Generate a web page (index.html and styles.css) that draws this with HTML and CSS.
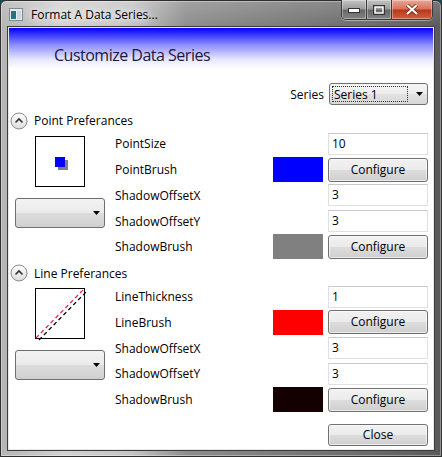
FILE: index.html
```html
<!DOCTYPE html>
<html lang="en">
<head>
    <meta charset="UTF-8">
    <title>Format A Data Series...</title>
    <link rel="stylesheet" href="styles.css">
</head>
<body>
    <div class="window">
        <div class="titlebar">
            <svg class="app-icon" width="14" height="13" viewBox="0 0 14 13">
                <rect x="0.5" y="0.5" width="13" height="12" fill="#e4ecee" stroke="#7a8a90"/>
                <rect x="2" y="3" width="5" height="8" fill="#2f7078"/>
                <rect x="8" y="3" width="4" height="8" fill="#c8d8dc"/>
            </svg>
            <span class="caption">Format A Data Series...</span>
            <div class="caption-buttons">
                <div class="cap-btn min">
                    <svg width="12" height="6" viewBox="0 0 12 6"><rect x="0.5" y="1.5" width="11" height="4" fill="#fff" stroke="#333"/></svg>
                </div>
                <div class="cap-btn max">
                    <svg width="12" height="10" viewBox="0 0 12 10"><rect x="1" y="1" width="10" height="8" fill="none" stroke="#333" stroke-width="2"/><rect x="2" y="2" width="8" height="6" fill="none" stroke="#fff" stroke-width="1.5"/></svg>
                </div>
                <div class="cap-btn close">
                    <svg width="14" height="11" viewBox="0 0 14 11"><path d="M2 1 L12 10 M12 1 L2 10" stroke="#6a2010" stroke-width="3.6"/><path d="M2 1 L12 10 M12 1 L2 10" stroke="#fff" stroke-width="2.2"/></svg>
                </div>
            </div>
        </div>

        <div class="client">
            <div class="banner">
                <h1>Customize Data Series</h1>
            </div>

            <div class="series-row">
                <span>Series</span>
                <div class="combo series-combo">
                    <span class="focus">Series 1</span>
                    <svg class="arrow" width="7" height="4" viewBox="0 0 7 4"><polygon points="0,0 7,0 3.5,4" fill="#000"/></svg>
                </div>
            </div>

            <section class="group">
                <div class="expander">
                    <svg class="exp-btn" width="18" height="18" viewBox="0 0 18 18">
                        <defs><linearGradient id="eg1" x1="0" y1="0" x2="0" y2="1"><stop offset="0" stop-color="#ffffff"/><stop offset="1" stop-color="#dcdcdc"/></linearGradient></defs>
                        <circle cx="9" cy="9" r="8" fill="url(#eg1)" stroke="#8c8c8c"/>
                        <path d="M5.5 10.5 L9 7 L12.5 10.5" fill="none" stroke="#333" stroke-width="1.6"/>
                    </svg>
                    Point Preferances
                </div>
                <div class="group-body">
                    <div class="preview-col">
                        <div class="preview">
                            <svg width="48" height="49" viewBox="0 0 48 49">
                                <rect x="22" y="23" width="10" height="10" fill="#808080"/>
                                <rect x="19" y="20" width="10" height="10" fill="#0000ff"/>
                            </svg>
                        </div>
                        <div class="combo drop">
                            <svg class="arrow" width="7" height="4" viewBox="0 0 7 4"><polygon points="0,0 7,0 3.5,4" fill="#000"/></svg>
                        </div>
                    </div>
                    <div class="props">
                        <span class="label">PointSize</span><span></span><div class="field">10</div>
                        <span class="label">PointBrush</span><span class="swatch blue"></span><div class="btn">Configure</div>
                        <span class="label">ShadowOffsetX</span><span></span><div class="field">3</div>
                        <span class="label">ShadowOffsetY</span><span></span><div class="field">3</div>
                        <span class="label">ShadowBrush</span><span class="swatch gray"></span><div class="btn">Configure</div>
                    </div>
                </div>
            </section>

            <section class="group second">
                <div class="expander">
                    <svg class="exp-btn" width="18" height="18" viewBox="0 0 18 18">
                        <defs><linearGradient id="eg2" x1="0" y1="0" x2="0" y2="1"><stop offset="0" stop-color="#ffffff"/><stop offset="1" stop-color="#dcdcdc"/></linearGradient></defs>
                        <circle cx="9" cy="9" r="8" fill="url(#eg2)" stroke="#8c8c8c"/>
                        <path d="M5.5 10.5 L9 7 L12.5 10.5" fill="none" stroke="#333" stroke-width="1.6"/>
                    </svg>
                    Line Preferances
                </div>
                <div class="group-body">
                    <div class="preview-col">
                        <div class="preview">
                            <svg width="48" height="49" viewBox="0 0 48 49" overflow="visible">
                                <line x1="3" y1="51" x2="50" y2="3" stroke="#000" stroke-width="1.3" stroke-dasharray="4 3"/>
                                <line x1="0" y1="49" x2="47" y2="1" stroke="#e0204a" stroke-width="1.3" stroke-dasharray="4 3"/>
                            </svg>
                        </div>
                        <div class="combo drop">
                            <svg class="arrow" width="7" height="4" viewBox="0 0 7 4"><polygon points="0,0 7,0 3.5,4" fill="#000"/></svg>
                        </div>
                    </div>
                    <div class="props">
                        <span class="label">LineThickness</span><span></span><div class="field">1</div>
                        <span class="label">LineBrush</span><span class="swatch red"></span><div class="btn">Configure</div>
                        <span class="label">ShadowOffsetX</span><span></span><div class="field">3</div>
                        <span class="label">ShadowOffsetY</span><span></span><div class="field">3</div>
                        <span class="label">ShadowBrush</span><span class="swatch black"></span><div class="btn">Configure</div>
                    </div>
                </div>
            </section>

            <div class="footer">
                <div class="btn close-btn">Close</div>
            </div>
        </div>
    </div>
</body>
</html>
```

FILE: styles.css
```css
html, body {
    margin: 0;
    padding: 0;
    background: #1d4a52;
}
body {
    font-family: "Open Sans", "Noto Sans", sans-serif;
    font-size: 12px;
    color: #000;
}
.window {
    width: 442px;
    height: 457px;
    box-sizing: border-box;
    display: flex;
    flex-direction: column;
    border: 1px solid #2e2e2e;
    border-radius: 6px 6px 0 0;
    background:
        linear-gradient(180deg, rgba(255, 255, 255, 0.18), rgba(255, 255, 255, 0) 26px),
        linear-gradient(90deg, #b4b4b4 0%, #d2d2d2 14%, #c4c4c4 30%, #8e8e8e 42%, #7c7c7c 62%, #6e6e6e 80%, #5a5a5a 100%);
    box-shadow: inset 0 0 0 1px rgba(255, 255, 255, 0.35);
}
.titlebar {
    height: 26px;
    display: flex;
    align-items: flex-start;
    padding: 0 8px 0 8px;
}
.app-icon {
    margin-top: 7px;
}
.caption {
    margin: 5px 0 0 8px;
    line-height: 17px;
    font-size: 12px;
    text-shadow: 0 0 6px #fff, 0 0 10px #fff;
}
.caption-buttons {
    margin-left: auto;
    margin-top: -1px;
    display: flex;
    height: 19px;
    border: 1px solid #3a3a3a;
    border-top: none;
    border-radius: 0 0 5px 5px;
    overflow: hidden;
    box-shadow: 0 1px 0 rgba(255, 255, 255, 0.4);
}
.cap-btn {
    display: flex;
    align-items: center;
    justify-content: center;
    width: 24px;
    background: linear-gradient(180deg, #c4c4c4 0%, #9a9a9a 48%, #666 52%, #848484 100%);
    box-shadow: inset 0 0 0 1px rgba(255, 255, 255, 0.35);
}
.cap-btn.min {
    border-right: 1px solid #3a3a3a;
}
.cap-btn.max {
    border-right: 1px solid #3a3a3a;
}
.cap-btn.close {
    width: 40px;
    background: linear-gradient(180deg, #eaa898 0%, #d87058 48%, #b8361a 52%, #d06040 100%);
}
.client {
    flex: 1;
    margin: 0 7px 6px 7px;
    background: #fff;
    border: 1px solid #e8e8e8;
    box-shadow: 0 0 0 1px #3c3c3c;
    display: flex;
    flex-direction: column;
}
.banner {
    height: 48px;
    background: linear-gradient(180deg, #0000ff 0%, #8c8cff 35%, #e6e6ff 65%, #ffffff 85%);
}
.banner h1 {
    margin: 0;
    padding: 17px 0 0 45px;
    font-size: 16px;
    line-height: 20px;
    font-weight: normal;
    color: #1a1a3c;
    letter-spacing: -0.5px;
}
.series-row {
    display: flex;
    justify-content: flex-end;
    align-items: center;
    gap: 5px;
    height: 22px;
    margin: 7px 5px 0 0;
}
.combo {
    box-sizing: border-box;
    border: 1px solid #707070;
    border-radius: 3px;
    background: linear-gradient(180deg, #f2f2f2 0%, #ebebeb 50%, #dddddd 50%, #cfcfcf 100%);
    display: flex;
    align-items: center;
}
.series-combo {
    width: 99px;
    height: 22px;
    padding: 0 3px 0 2px;
    background: linear-gradient(180deg, #f6f6f6 0%, #ececec 50%, #e2e2e2 50%, #d8d8d8 100%);
}
.series-combo .focus {
    width: 76px;
    height: 16px;
    line-height: 16px;
    border: 1px dotted #333;
    padding-left: 1px;
    box-sizing: border-box;
}
.arrow {
    margin-left: auto;
    margin-right: 4px;
}
.series-combo .arrow {
    margin-right: 1px;
}
.group {
    margin-top: 5px;
}
.group.second {
    margin-top: 3px;
}
.expander {
    height: 21px;
    display: flex;
    align-items: center;
    gap: 6px;
    padding-left: 1px;
}
.group-body {
    display: flex;
}
.preview-col {
    width: 106px;
    flex-shrink: 0;
}
.preview {
    width: 50px;
    height: 51px;
    box-sizing: border-box;
    border: 1px solid #000;
    margin: 4.5px 0 0 26px;
}
.preview svg {
    display: block;
}
.drop {
    width: 90px;
    height: 30px;
    margin: 11px 0 0 6px;
}
.props {
    flex: 1;
    display: grid;
    grid-template-columns: 1fr 50px 100px;
    grid-auto-rows: 25.75px;
    column-gap: 5px;
    align-items: center;
    margin-right: 5px;
}
.field {
    box-sizing: border-box;
    height: 22px;
    line-height: 20px;
    border: 1px solid #dfe0e4;
    border-top-color: #c8c9ce;
    padding-left: 3px;
    background: #fff;
}
.btn {
    box-sizing: border-box;
    height: 24px;
    line-height: 22px;
    text-align: center;
    border: 1px solid #707070;
    border-radius: 3px;
    background: linear-gradient(180deg, #f2f2f2 0%, #ebebeb 50%, #dddddd 50%, #cfcfcf 100%);
    box-shadow: inset 0 0 0 1px rgba(255, 255, 255, 0.6);
}
.swatch {
    height: 25px;
}
.swatch.blue {
    background: #0000ff;
}
.swatch.gray {
    background: #808080;
}
.swatch.red {
    background: #ff0000;
}
.swatch.black {
    background: #140000;
}
.footer {
    display: flex;
    justify-content: flex-end;
    margin: 11px 5px 0 0;
}
.close-btn {
    width: 100px;
    height: 22px;
    line-height: 20px;
}
```
